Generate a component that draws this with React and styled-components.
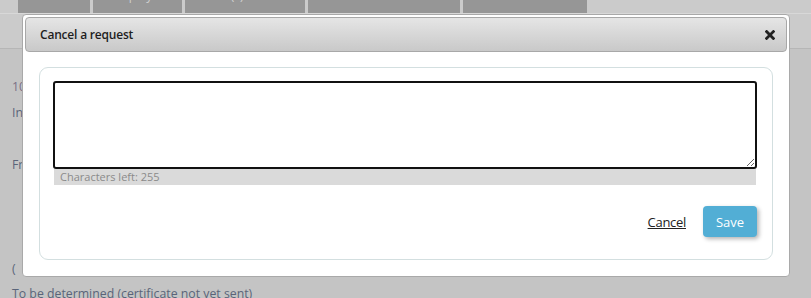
import React from "react";
import styled, { createGlobalStyle } from "styled-components";

const Global = createGlobalStyle`
  html, body { margin: 0; padding: 0; }
  body {
    width: 811px; height: 298px; overflow: hidden;
    background: #c4c4c4;
    font-family: "Open Sans", "Noto Sans", sans-serif;
  }
`;

const Page = styled.div`
  position: relative;
  width: 811px;
  height: 298px;
  overflow: hidden;
  background: #c4c4c4;
`;

const TabBar = styled.div`
  display: flex;
  gap: 3px;
  height: 13px;
  padding-left: 18px;
  background: #cbcbcb;
  overflow: hidden;
`;

const Tab = styled.div`
  width: ${(p) => p.$w}px;
  height: 13px;
  background: #969696;
  color: #cfcfcf;
  font-size: 12px;
  line-height: 12px;
  display: flex;
  justify-content: center;
  align-items: flex-end;
  & > span { transform: translateY(-11px); display: block; white-space: nowrap; }
`;

const Band = styled.div`
  height: 34px;
  background: #cbcbcb;
  border-top: 1px solid #d8d8d8;
  border-bottom: 1px solid #b6b6b6;
`;

const Content = styled.div`
  display: flex;
  flex-direction: column;
  padding-left: 12px;
  color: #5a6479;
  font-size: 12.3px;
`;

const Line = styled.div`
  height: ${(p) => p.$h}px;
  line-height: ${(p) => p.$h}px;
  color: ${(p) => p.$c || "#5a6479"};
  white-space: nowrap;
`;

const Modal = styled.div`
  position: absolute;
  left: 22px;
  top: 14px;
  width: 762px;
  height: 257px;
  background: #fff;
  border: 1px solid #a9a9a9;
  border-radius: 4px;
  padding: 2px;
  box-sizing: content-box;
  display: flex;
  flex-direction: column;
`;

const Header = styled.div`
  height: 33px;
  border: 1px solid #a8a8a8;
  border-radius: 4px;
  background: linear-gradient(#e5e5e5, #c9c9c9);
  display: flex;
  align-items: center;
  justify-content: space-between;
  padding: 0 11px 0 14px;
`;

const Title = styled.div`
  font-size: 12px;
  font-weight: 600;
  color: #1e1e1e;
  letter-spacing: -0.2px;
`;

const Close = styled.div`
  width: 10px;
  height: 10px;
  display: flex;
  align-items: center;
  justify-content: center;
`;

const Fieldset = styled.div`
  margin: 15px 14px 0 14px;
  height: 178px;
  border: 1px solid #d3dfe0;
  border-radius: 9px;
  padding: 13px 15px 0 13px;
  display: flex;
  flex-direction: column;
`;

const TextArea = styled.textarea`
  height: 88px;
  box-sizing: border-box;
  border: 2px solid #111;
  border-radius: 3px;
  resize: vertical;
  outline: none;
  font-family: inherit;
  font-size: 13px;
  padding: 4px;
  margin: 0;
  display: block;
`;

const Counter = styled.div`
  margin: 0 1px 0 1px;
  height: 16px;
  background: #dadada;
  color: #8a8a8a;
  font-size: 11px;
  line-height: 16px;
  padding-left: 6px;
`;

const Actions = styled.div`
  display: flex;
  justify-content: flex-end;
  align-items: center;
  gap: 17px;
  margin-top: 21px;
`;

const CancelLink = styled.a`
  color: #222;
  font-size: 13px;
  text-decoration: underline;
  cursor: pointer;
  letter-spacing: -0.3px;
`;

const SaveButton = styled.button`
  width: 54px;
  height: 31px;
  border: none;
  border-radius: 4px;
  background: #52aed5;
  color: #fff;
  font-family: inherit;
  font-size: 13px;
  box-shadow: 2px 2px 4px rgba(0, 0, 0, 0.3);
  cursor: pointer;
`;

const tabs = [
  ["Worker", 72],
  ["Employer", 89],
  ["Place(s) of work", 120],
  ["Period and conditions", 152],
  ["Contact data", 124],
];

export default function App() {
  return (
    <Page>
      <Global />
      <TabBar>
        {tabs.map(([t, w]) => (
          <Tab key={t} $w={w}>
            <span>{t}</span>
          </Tab>
        ))}
      </TabBar>
      <Band />
      <Content>
        <Line $h={25} />
        <Line $h={26} $c="#7a6f86">10/03/2024</Line>
        <Line $h={26}>Interim</Line>
        <Line $h={26} />
        <Line $h={26}>From 10/03/2024</Line>
        <Line $h={26} />
        <Line $h={26} />
        <Line $h={26} />
        <Line $h={26}>(</Line>
        <Line $h={24}>To be determined (certificate not yet sent)</Line>
      </Content>
      <Modal>
        <Header>
          <Title>Cancel a request</Title>
          <Close>
            <svg width="10" height="10" viewBox="0 0 10 10">
              <path d="M1.6 1.6 L8.4 8.4 M8.4 1.6 L1.6 8.4" stroke="#222" strokeWidth="2.8" strokeLinecap="square" />
            </svg>
          </Close>
        </Header>
        <Fieldset>
          <TextArea autoFocus maxLength={255} />
          <Counter>Characters left: 255</Counter>
          <Actions>
            <CancelLink>Cancel</CancelLink>
            <SaveButton>Save</SaveButton>
          </Actions>
        </Fieldset>
      </Modal>
    </Page>
  );
}
